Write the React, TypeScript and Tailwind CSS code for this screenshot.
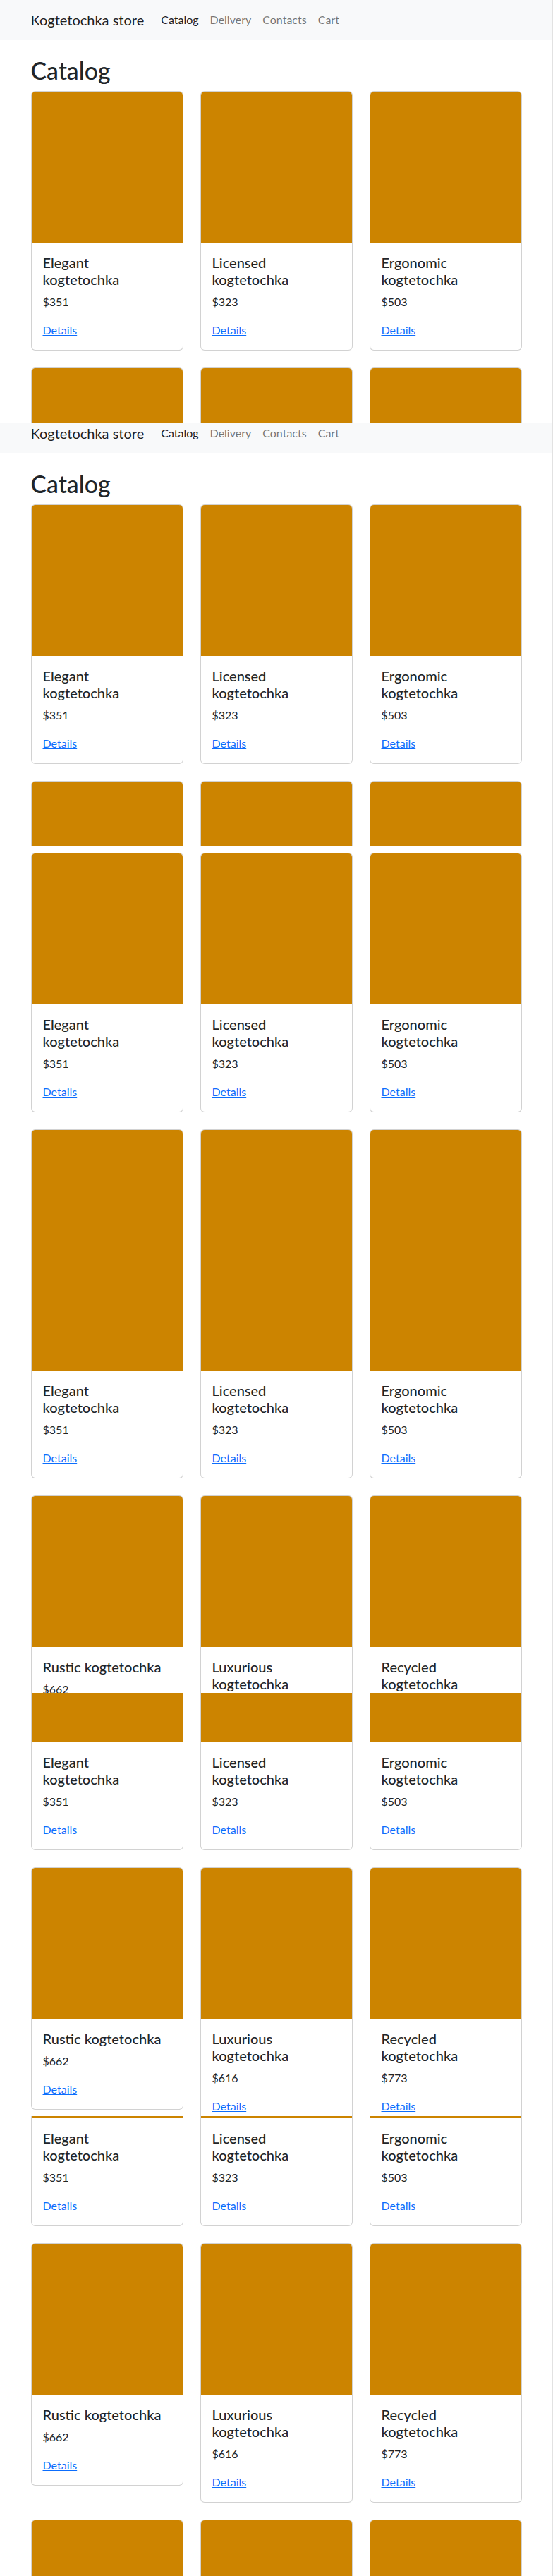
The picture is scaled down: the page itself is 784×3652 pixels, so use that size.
const products = [
  { name: 'Elegant\nkogtetochka', price: 351 },
  { name: 'Licensed\nkogtetochka', price: 323 },
  { name: 'Ergonomic\nkogtetochka', price: 503 },
  { name: 'Rustic kogtetochka', price: 662 },
  { name: 'Luxurious\nkogtetochka', price: 616 },
  { name: 'Recycled\nkogtetochka', price: 773 },
  { name: 'Handmade\nkogtetochka', price: 418 },
  { name: 'Sleek\nkogtetochka', price: 287 },
  { name: 'Gorgeous\nkogtetochka', price: 540 },
]

// the capture was stitched from several scrolled frames; each slice shows the page from a given offset
const slices = [
  { h: 'h-[600px]', shift: 'mt-0' },
  { h: 'h-[600px]', shift: 'mt-[-14px]' },
  { h: 'h-[600px]', shift: 'mt-[-120px]' },
  { h: 'h-[600px]', shift: 'mt-[-201px]' },
  { h: 'h-[600px]', shift: 'mt-[-274px]' },
  { h: 'h-[652px]', shift: 'mt-[-341px]' },
]

function Navbar() {
  return (
    <nav className="h-14 bg-[#f8f9fa] flex items-center">
      <div className="w-[720px] mx-auto px-3 flex items-center">
        <a className="text-[20px] leading-[30px] text-[rgba(0,0,0,0.9)] mr-4">Kogtetochka store</a>
        <ul className="flex text-[16px] leading-6">
          <li><a className="block px-2 py-2 text-[rgba(0,0,0,0.9)]">Catalog</a></li>
          <li><a className="block px-2 py-2 text-[rgba(0,0,0,0.55)]">Delivery</a></li>
          <li><a className="block px-2 py-2 text-[rgba(0,0,0,0.55)]">Contacts</a></li>
          <li><a className="block px-2 py-2 text-[rgba(0,0,0,0.55)]">Cart</a></li>
        </ul>
      </div>
    </nav>
  )
}

function ProductCard({ name, price }: { name: string; price: number }) {
  return (
    <div className="border border-[rgba(0,0,0,0.175)] rounded-[6px] overflow-hidden bg-white">
      <div className="h-[214px] bg-[#cc8400]" />
      <div className="p-4">
        <h5 className="text-[20px] leading-6 font-medium mb-2 whitespace-pre-line">{name}</h5>
        <p className="text-[16px] leading-6 mb-4">${price}</p>
        <a className="text-[16px] leading-6 text-[#0d6efd] underline">Details</a>
      </div>
    </div>
  )
}

function CatalogPage() {
  return (
    <div className="bg-white text-[#212529]">
      <Navbar />
      <div className="w-[720px] mx-auto px-3 pt-6">
        <h1 className="text-[33.76px] leading-[41px] font-medium mb-2">Catalog</h1>
        <div className="grid grid-cols-3 gap-6 items-start">
          {products.map((p) => (
            <ProductCard key={p.name} name={p.name} price={p.price} />
          ))}
        </div>
      </div>
    </div>
  )
}

export default function App() {
  return (
    <div className="w-[784px] border-r border-[#e2e2e2] bg-white font-['Lato',sans-serif]">
      {slices.map((s, i) => (
        <div key={i} className={`${s.h} overflow-hidden`}>
          <div className={s.shift}>
            <CatalogPage />
          </div>
        </div>
      ))}
    </div>
  )
}
